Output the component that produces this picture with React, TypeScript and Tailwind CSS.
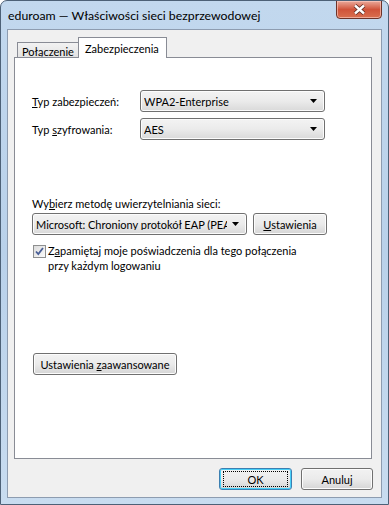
import React from "react";

const font = { fontFamily: 'Lato, "Noto Sans", sans-serif' };

function Arrow() {
  return (
    <svg width="7" height="4" viewBox="0 0 7 4" className="shrink-0">
      <path d="M0 0h7L3.5 4z" fill="#000" />
    </svg>
  );
}

function Select({ text, className }: { text: string; className: string }) {
  return (
    <div
      className={`flex items-center h-[22px] rounded-[3px] border border-[#707070] bg-gradient-to-b from-[#f3f3f3] via-[#ebebeb] to-[#d9d9d9] pl-[3px] pr-[7px] shadow-[inset_0_0_0_1px_#fcfcfc] ${className}`}
    >
      <span className="flex-1 overflow-hidden whitespace-nowrap mr-[5px]">{text}</span>
      <Arrow />
    </div>
  );
}

function Button({ children, className, def }: { children: React.ReactNode; className: string; def?: boolean }) {
  return (
    <div
      className={`flex items-center justify-center whitespace-nowrap h-[22px] rounded-[3px] border ${
        def ? "border-[#3c7fb1] shadow-[inset_0_0_0_1px_#48d0f8]" : "border-[#707070] shadow-[inset_0_0_0_1px_#fcfcfc]"
      } bg-gradient-to-b from-[#f2f2f2] via-[#ebebeb] to-[#d5d5d5] ${className}`}
    >
      {def ? (
        <div className="flex items-center justify-center w-[calc(100%-6px)] h-[16px] border border-dotted border-black">{children}</div>
      ) : (
        children
      )}
    </div>
  );
}

export default function App() {
  return (
    <div
      style={font}
      className="w-[389px] h-[505px] text-[11px] leading-none text-black rounded-t-[7px] border border-[#4d6177] bg-gradient-to-b from-[#c2d8ee] via-[#b9d1ea] to-[#c8dcf0] flex flex-col overflow-hidden"
    >
      {/* title bar */}
      <div className="flex h-[28px] justify-between">
        <div className="pl-[7px] pt-[9px] text-[12.3px] whitespace-nowrap">eduroam — Właściwości sieci bezprzewodowej</div>
        <div className="mr-[6px] mt-[-1px] w-[46px] h-[19px] rounded-b-[4px] border border-[#6d3329] bg-gradient-to-b from-[#e9a99b] via-[#d0533a] to-[#d96f4f] flex items-center justify-center shadow-[inset_0_0_0_1px_rgba(255,210,200,0.6)]">
          <svg width="13" height="11" viewBox="0 0 13 11">
            <path d="M2 1.5l4.5 4-4.5 4M11 1.5l-4.5 4 4.5 4" stroke="#5a2a22" strokeWidth="4" fill="none" />
            <path d="M2 1.5l4.5 4-4.5 4M11 1.5l-4.5 4 4.5 4" stroke="#fff" strokeWidth="2.4" fill="none" />
          </svg>
        </div>
      </div>

      {/* client area */}
      <div className="ml-[6px] mr-[6px] h-[469px] border border-[#8d9cb0] bg-[#f0f0f0] flex flex-col pl-[6px] pr-[9px] pt-[7px]">
        {/* tabs */}
        <div className="flex items-end h-[20px] pl-[3px]">
          <div className="h-[15px] w-[62px] border border-b-0 border-[#898c95] bg-gradient-to-b from-[#f2f2f2] to-[#e3e3e3] pl-[4px] pt-[2px] flex items-center whitespace-nowrap">
            Połączenie
          </div>
          <div className="h-[21px] w-[89px] -ml-px mb-[-1px] relative border border-b-0 border-[#898c95] bg-white pl-[6px] flex items-center whitespace-nowrap">
            Zabezpieczenia
          </div>
        </div>

        {/* panel */}
        <div className="h-[402px] border border-[#898c95] bg-white pl-[17px] pt-[32px] flex flex-col">
          <div className="flex items-center h-[22px]">
            <span className="w-[108px]">
              <u>T</u>yp zabezpieczeń:
            </span>
            <Select text="WPA2-Enterprise" className="w-[185px]" />
          </div>
          <div className="flex items-center h-[22px] mt-[6px]">
            <span className="w-[108px]">
              Typ <u>s</u>zyfrowania:
            </span>
            <Select text="AES" className="w-[185px]" />
          </div>

          <div className="mt-[58px] h-[12px]">
            Wy<u>b</u>ierz metodę uwierzytelniania sieci:
          </div>
          <div className="flex mt-[3px] gap-[6px]">
            <Select text="Microsoft: Chroniony protokół EAP (PEAP)" className="w-[215px]" />
            <Button className="w-[74px]">
              <span>
                <u>U</u>stawienia
              </span>
            </Button>
          </div>

          <div className="flex mt-[8px] pl-[1px] gap-[2px]">
            <div className="w-[13px] h-[13px] shrink-0 border border-[#8e8f8f] bg-gradient-to-br from-[#dcdcdc] to-[#fbfbfb] flex items-center justify-center mt-[2px]">
              <svg width="9" height="9" viewBox="0 0 9 9">
                <path d="M1 4.5l2.3 2.6L8 1" stroke="#4a5f97" strokeWidth="1.8" fill="none" />
              </svg>
            </div>
            <div className="leading-[15px]">
              Z<u>a</u>pamiętaj moje poświadczenia dla tego połączenia
              <br />
              przy każdym logowaniu
            </div>
          </div>

          <Button className="w-[144px] mt-[80px] ml-[1px]">
            <span>
              Ustawienia <u>z</u>aawansowane
            </span>
          </Button>
        </div>

        {/* dialog buttons */}
        <div className="flex justify-end gap-[9px] mt-[9px] -mr-[1px]">
          <Button def className="w-[73px]">
            OK
          </Button>
          <Button className="w-[72px]">Anuluj</Button>
        </div>
      </div>
    </div>
  );
}
